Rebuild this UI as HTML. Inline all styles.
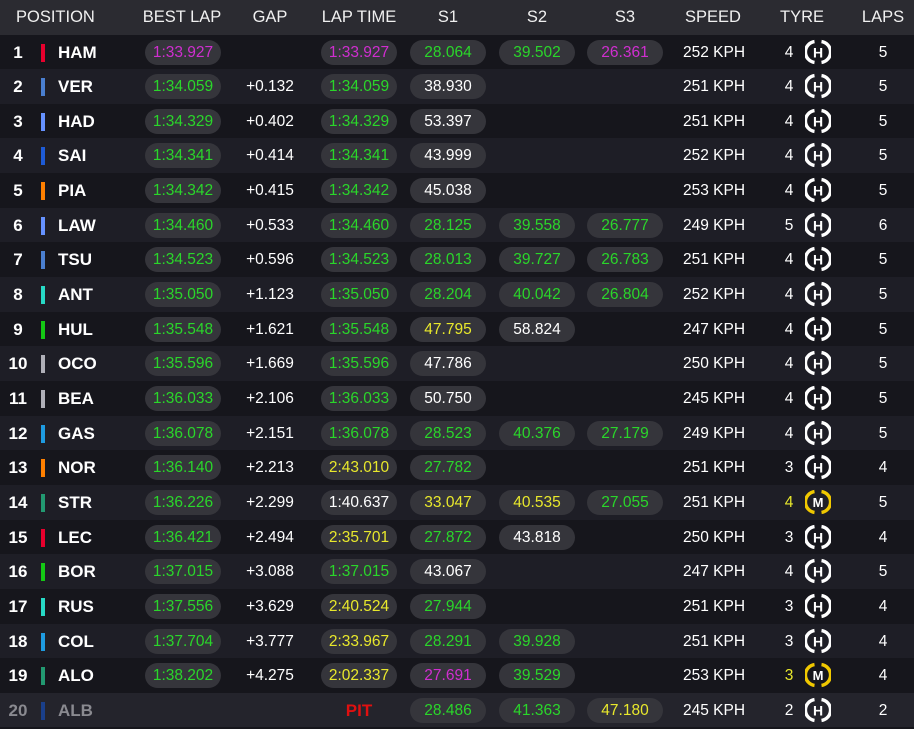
<!DOCTYPE html>
<html><head><meta charset="utf-8"><style>
*{margin:0;padding:0;box-sizing:border-box}
body{width:914px;height:724px;background:#16161c;font-family:"Liberation Sans",sans-serif;color:#fff;overflow:hidden;position:relative}
.hd{position:absolute;left:0;top:0;width:914px;height:34.5px;background:#2b2b31;font-size:16.5px;color:#f0f0f0}
.hd span{position:absolute;top:8px;text-align:center}
.r{position:absolute;left:0;width:914px;height:34.65px}
.r span{position:absolute;top:1px;line-height:34.65px;font-size:15.5px;text-align:center}
.pos{left:2px;width:32px;font-weight:bold;font-size:17px!important}
.bar{left:41px;width:4px;height:18px;top:9px!important}
.nm{left:58px;font-weight:bold;font-size:17px!important;text-align:left!important}
.p{height:25px;top:5px!important;line-height:25px!important;border-radius:13px;background:#35353b;width:76px}
.b{left:145px}.lt{left:321px}.s1{left:410px}.s2{left:499px}.s3{left:587px}
.gap{left:235px;width:70px}
.sp{left:672px;width:84px}
.tn{left:782px;width:14px}
.lp{left:868px;width:30px}
.g{color:#2ad62a}.pu{color:#d02ed0}.y{color:#e8e82c}.w{color:#fff}
svg.t{position:absolute;top:4px;left:805px}
</style></head><body>
<div class="hd"><span style="left:16px">POSITION</span><span style="left:137px;width:90px">BEST LAP</span><span style="left:240px;width:60px">GAP</span><span style="left:314px;width:90px">LAP TIME</span><span style="left:418px;width:60px">S1</span><span style="left:507px;width:60px">S2</span><span style="left:595px;width:60px">S3</span><span style="left:673px;width:80px">SPEED</span><span style="left:772px;width:60px">TYRE</span><span style="left:853px;width:60px">LAPS</span></div>
<svg width="0" height="0" style="position:absolute"><defs>
<symbol id="H" viewBox="0 0 26 26"><path d="M9.5 2.6A10.5 10.5 0 0 0 9.5 23.4M16.5 2.6A10.5 10.5 0 0 1 16.5 23.4" fill="none" stroke="#fff" stroke-width="3.4"/><text x="13" y="18.3" text-anchor="middle" font-family="Liberation Sans" font-weight="bold" font-size="14" fill="#fff">H</text></symbol>
<symbol id="M" viewBox="0 0 26 26"><path d="M9.5 2.6A10.5 10.5 0 0 0 9.5 23.4M16.5 2.6A10.5 10.5 0 0 1 16.5 23.4" fill="none" stroke="#f0c800" stroke-width="3.4"/><text x="13" y="18" text-anchor="middle" font-family="Liberation Sans" font-weight="bold" font-size="13" fill="#fff">M</text></symbol>
</defs></svg>
<div style="position:absolute;top:34.5px;left:0;width:914px">
<div class="r" style="top:0px;background:#16161c"><span class="pos">1</span><span class="bar" style="background:#e8002d"></span><span class="nm">HAM</span><span class="p b pu">1:33.927</span><span class="p lt pu">1:33.927</span><span class="p s1 g">28.064</span><span class="p s2 g">39.502</span><span class="p s3 pu">26.361</span><span class="sp">252 KPH</span><span class="tn">4</span><svg class="t" width="26" height="26"><use href="#H"/></svg><span class="lp">5</span></div>
<div class="r" style="top:34.65px;background:#1e1e26"><span class="pos">2</span><span class="bar" style="background:#4a7fd0"></span><span class="nm">VER</span><span class="p b g">1:34.059</span><span class="gap">+0.132</span><span class="p lt g">1:34.059</span><span class="p s1 w">38.930</span><span class="sp">251 KPH</span><span class="tn">4</span><svg class="t" width="26" height="26"><use href="#H"/></svg><span class="lp">5</span></div>
<div class="r" style="top:69.3px;background:#16161c"><span class="pos">3</span><span class="bar" style="background:#6692ff"></span><span class="nm">HAD</span><span class="p b g">1:34.329</span><span class="gap">+0.402</span><span class="p lt g">1:34.329</span><span class="p s1 w">53.397</span><span class="sp">251 KPH</span><span class="tn">4</span><svg class="t" width="26" height="26"><use href="#H"/></svg><span class="lp">5</span></div>
<div class="r" style="top:103.95px;background:#1e1e26"><span class="pos">4</span><span class="bar" style="background:#1e5bd6"></span><span class="nm">SAI</span><span class="p b g">1:34.341</span><span class="gap">+0.414</span><span class="p lt g">1:34.341</span><span class="p s1 w">43.999</span><span class="sp">252 KPH</span><span class="tn">4</span><svg class="t" width="26" height="26"><use href="#H"/></svg><span class="lp">5</span></div>
<div class="r" style="top:138.6px;background:#16161c"><span class="pos">5</span><span class="bar" style="background:#ff8000"></span><span class="nm">PIA</span><span class="p b g">1:34.342</span><span class="gap">+0.415</span><span class="p lt g">1:34.342</span><span class="p s1 w">45.038</span><span class="sp">253 KPH</span><span class="tn">4</span><svg class="t" width="26" height="26"><use href="#H"/></svg><span class="lp">5</span></div>
<div class="r" style="top:173.25px;background:#1e1e26"><span class="pos">6</span><span class="bar" style="background:#6692ff"></span><span class="nm">LAW</span><span class="p b g">1:34.460</span><span class="gap">+0.533</span><span class="p lt g">1:34.460</span><span class="p s1 g">28.125</span><span class="p s2 g">39.558</span><span class="p s3 g">26.777</span><span class="sp">249 KPH</span><span class="tn">5</span><svg class="t" width="26" height="26"><use href="#H"/></svg><span class="lp">6</span></div>
<div class="r" style="top:207.9px;background:#16161c"><span class="pos">7</span><span class="bar" style="background:#4a7fd0"></span><span class="nm">TSU</span><span class="p b g">1:34.523</span><span class="gap">+0.596</span><span class="p lt g">1:34.523</span><span class="p s1 g">28.013</span><span class="p s2 g">39.727</span><span class="p s3 g">26.783</span><span class="sp">251 KPH</span><span class="tn">4</span><svg class="t" width="26" height="26"><use href="#H"/></svg><span class="lp">5</span></div>
<div class="r" style="top:242.55px;background:#1e1e26"><span class="pos">8</span><span class="bar" style="background:#27d9c6"></span><span class="nm">ANT</span><span class="p b g">1:35.050</span><span class="gap">+1.123</span><span class="p lt g">1:35.050</span><span class="p s1 g">28.204</span><span class="p s2 g">40.042</span><span class="p s3 g">26.804</span><span class="sp">252 KPH</span><span class="tn">4</span><svg class="t" width="26" height="26"><use href="#H"/></svg><span class="lp">5</span></div>
<div class="r" style="top:277.2px;background:#16161c"><span class="pos">9</span><span class="bar" style="background:#14c814"></span><span class="nm">HUL</span><span class="p b g">1:35.548</span><span class="gap">+1.621</span><span class="p lt g">1:35.548</span><span class="p s1 y">47.795</span><span class="p s2 w">58.824</span><span class="sp">247 KPH</span><span class="tn">4</span><svg class="t" width="26" height="26"><use href="#H"/></svg><span class="lp">5</span></div>
<div class="r" style="top:311.85px;background:#1e1e26"><span class="pos">10</span><span class="bar" style="background:#b0b0b8"></span><span class="nm">OCO</span><span class="p b g">1:35.596</span><span class="gap">+1.669</span><span class="p lt g">1:35.596</span><span class="p s1 w">47.786</span><span class="sp">250 KPH</span><span class="tn">4</span><svg class="t" width="26" height="26"><use href="#H"/></svg><span class="lp">5</span></div>
<div class="r" style="top:346.5px;background:#16161c"><span class="pos">11</span><span class="bar" style="background:#b0b0b8"></span><span class="nm">BEA</span><span class="p b g">1:36.033</span><span class="gap">+2.106</span><span class="p lt g">1:36.033</span><span class="p s1 w">50.750</span><span class="sp">245 KPH</span><span class="tn">4</span><svg class="t" width="26" height="26"><use href="#H"/></svg><span class="lp">5</span></div>
<div class="r" style="top:381.15px;background:#1e1e26"><span class="pos">12</span><span class="bar" style="background:#1e9be0"></span><span class="nm">GAS</span><span class="p b g">1:36.078</span><span class="gap">+2.151</span><span class="p lt g">1:36.078</span><span class="p s1 g">28.523</span><span class="p s2 g">40.376</span><span class="p s3 g">27.179</span><span class="sp">249 KPH</span><span class="tn">4</span><svg class="t" width="26" height="26"><use href="#H"/></svg><span class="lp">5</span></div>
<div class="r" style="top:415.8px;background:#16161c"><span class="pos">13</span><span class="bar" style="background:#ff8000"></span><span class="nm">NOR</span><span class="p b g">1:36.140</span><span class="gap">+2.213</span><span class="p lt y">2:43.010</span><span class="p s1 g">27.782</span><span class="sp">251 KPH</span><span class="tn">3</span><svg class="t" width="26" height="26"><use href="#H"/></svg><span class="lp">4</span></div>
<div class="r" style="top:450.45px;background:#1e1e26"><span class="pos">14</span><span class="bar" style="background:#229971"></span><span class="nm">STR</span><span class="p b g">1:36.226</span><span class="gap">+2.299</span><span class="p lt w">1:40.637</span><span class="p s1 y">33.047</span><span class="p s2 y">40.535</span><span class="p s3 g">27.055</span><span class="sp">251 KPH</span><span class="tn y">4</span><svg class="t" width="26" height="26"><use href="#M"/></svg><span class="lp">5</span></div>
<div class="r" style="top:485.1px;background:#16161c"><span class="pos">15</span><span class="bar" style="background:#e8002d"></span><span class="nm">LEC</span><span class="p b g">1:36.421</span><span class="gap">+2.494</span><span class="p lt y">2:35.701</span><span class="p s1 g">27.872</span><span class="p s2 w">43.818</span><span class="sp">250 KPH</span><span class="tn">3</span><svg class="t" width="26" height="26"><use href="#H"/></svg><span class="lp">4</span></div>
<div class="r" style="top:519.75px;background:#1e1e26"><span class="pos">16</span><span class="bar" style="background:#14c814"></span><span class="nm">BOR</span><span class="p b g">1:37.015</span><span class="gap">+3.088</span><span class="p lt g">1:37.015</span><span class="p s1 w">43.067</span><span class="sp">247 KPH</span><span class="tn">4</span><svg class="t" width="26" height="26"><use href="#H"/></svg><span class="lp">5</span></div>
<div class="r" style="top:554.4px;background:#16161c"><span class="pos">17</span><span class="bar" style="background:#27d9c6"></span><span class="nm">RUS</span><span class="p b g">1:37.556</span><span class="gap">+3.629</span><span class="p lt y">2:40.524</span><span class="p s1 g">27.944</span><span class="sp">251 KPH</span><span class="tn">3</span><svg class="t" width="26" height="26"><use href="#H"/></svg><span class="lp">4</span></div>
<div class="r" style="top:589.05px;background:#1e1e26"><span class="pos">18</span><span class="bar" style="background:#1e9be0"></span><span class="nm">COL</span><span class="p b g">1:37.704</span><span class="gap">+3.777</span><span class="p lt y">2:33.967</span><span class="p s1 g">28.291</span><span class="p s2 g">39.928</span><span class="sp">251 KPH</span><span class="tn">3</span><svg class="t" width="26" height="26"><use href="#H"/></svg><span class="lp">4</span></div>
<div class="r" style="top:623.7px;background:#16161c"><span class="pos">19</span><span class="bar" style="background:#229971"></span><span class="nm">ALO</span><span class="p b g">1:38.202</span><span class="gap">+4.275</span><span class="p lt y">2:02.337</span><span class="p s1 pu">27.691</span><span class="p s2 g">39.529</span><span class="sp">253 KPH</span><span class="tn y">3</span><svg class="t" width="26" height="26"><use href="#M"/></svg><span class="lp">4</span></div>
<div class="r" style="top:658.35px;background:#24242c"><span class="pos" style="color:#8a8a90">20</span><span class="bar" style="background:#1a3f8a"></span><span class="nm" style="color:#8a8a90">ALB</span><span class="lt" style="width:76px;color:#e01010;font-weight:bold;font-size:17px">PIT</span><span class="p s1 g">28.486</span><span class="p s2 g">41.363</span><span class="p s3 y">47.180</span><span class="sp">245 KPH</span><span class="tn">2</span><svg class="t" width="26" height="26"><use href="#H"/></svg><span class="lp">2</span></div>
</div>
</body></html>
